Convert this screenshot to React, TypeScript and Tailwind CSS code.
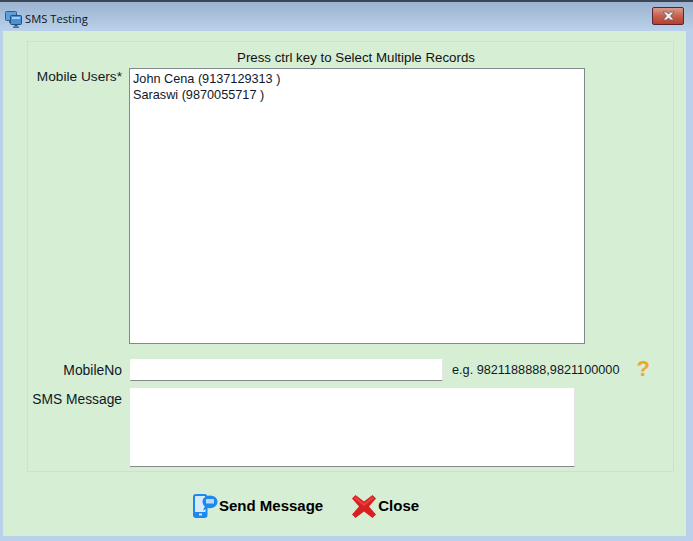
const users = ['John Cena (9137129313 )', 'Saraswi (9870055717 )']

function MonitorsIcon() {
  return (
    <svg width="17" height="17" viewBox="0 0 17 17" className="shrink-0">
      <rect x="0.500" y="0.500" width="11" height="9" rx="1" fill="#5f9fd8" stroke="#2f5f95" />
      <rect x="4" y="10" width="3" height="2" fill="#44617f" />
      <rect x="5.500" y="4.500" width="11" height="9" rx="1" fill="#4a90d4" stroke="#24527f" />
      <rect x="7" y="6" width="8" height="2" fill="#9fcdf2" />
      <rect x="9.500" y="14" width="3" height="1.500" fill="#34506c" />
      <rect x="8" y="15.500" width="6" height="1.500" fill="#54687c" />
    </svg>
  )
}

function CloseGlyph() {
  return (
    <svg width="13" height="10" viewBox="0 0 13 10">
      <path d="M1 1h3.500l2 2 2-2H12L8.500 5l3.500 4H8.500l-2-2-2 2H1l3.500-4z" fill="#f1f1f4" stroke="#5d5a66" strokeWidth="0.8" />
    </svg>
  )
}

function PhoneChatIcon() {
  return (
    <svg width="25" height="24" viewBox="0 0 25 24" className="shrink-0">
      <rect x="1" y="1" width="12.500" height="22" rx="2" fill="#d8ebfb" stroke="#1e88f0" strokeWidth="2" />
      <rect x="1" y="18" width="12.500" height="5" rx="1.500" fill="#1e88f0" />
      <rect x="6" y="19.500" width="3" height="2" fill="#d8ebfb" />
      <path d="M17 1.500c-4.300 0-7.500 2.800-7.500 6.300 0 1.900.9 3.500 2.300 4.600L10 16.500l4.700-2.500c.7.200 1.500.2 2.300.2 4.300 0 7.500-2.900 7.500-6.400S21.300 1.500 17 1.500z" fill="#1e88f0" />
      <rect x="13" y="5" width="8" height="4.500" rx="0.500" fill="#bcd9f5" />
    </svg>
  )
}

function RedCrossIcon() {
  return (
    <svg width="24" height="23" viewBox="0 0 24 23" className="shrink-0">
      <path d="M3.500 0 12 6.500 20.500 0 24 3.500 17 11.500 24 19.500 20.500 23 12 16.500 3.500 23 0 19.500 7 11.500 0 3.500z" fill="#d81f22" />
      <path d="M3.500 1.500 12 8.500 20.500 1.500 22 3.500 12 11 2 3.500z" fill="#e8403c" />
    </svg>
  )
}

export default function App() {
  return (
    <div className="flex h-[541px] w-[693px] flex-col overflow-hidden border-t-2 border-[#3a4656] bg-[#b9d1ea] font-['Liberation_Sans',sans-serif] text-[12.7px] leading-[16px] text-[#101828]">
      <div className="flex h-[29px] shrink-0 items-center justify-between bg-gradient-to-b from-[#9bb3cf] to-[#b9d1ea] pl-[5px] pr-[9px]">
        <div className="flex items-center gap-[3px] pt-[5px]">
          <MonitorsIcon />
          <span className="font-['Open_Sans',sans-serif] text-[11.2px] text-[#111]">SMS Testing</span>
        </div>
        <button
          type="button"
          className="mb-[1px] flex h-[18px] w-[32px] items-center justify-center rounded-[2px] border border-[#5c2330] bg-gradient-to-b from-[#d99a8d] via-[#c4604c] to-[#b8402c]"
        >
          <CloseGlyph />
        </button>
      </div>

      <div className="ml-[3px] mr-[7px] flex h-[505px] flex-col bg-[#d6eed4] pl-[24px] pr-[12px] pt-[10px]">
        <fieldset className="flex h-[431px] flex-col border border-[#d0e0ce] pt-[8px]">
          <p className="pl-[11px] text-center text-[13.3px] text-[#111]">Press ctrl key to Select Multiple Records</p>

          <div className="mt-[2px] flex">
            <label className="w-[94px] shrink-0 pt-[1px] text-right text-[13.700px]">Mobile Users*</label>
            <div className="ml-[7px] h-[276px] w-[456px] border border-[#7f8a8f] bg-white px-[3px] py-[2px]">
              {users.map((user) => (
                <div key={user}>{user}</div>
              ))}
            </div>
          </div>

          <div className="mt-[15px] flex items-center">
            <label className="w-[94px] shrink-0 text-right text-[13.900px]">MobileNo</label>
            <input
              type="text"
              className="ml-[8px] h-[22px] w-[313px] rounded-[1px] border-r border-b border-r-[#e4e4e4] border-b-[#85898c] bg-white outline-none"
            />
            <span className="ml-[9px]">e.g. 9821188888,9821100000</span>
            <span className="ml-[17px] -mt-[3px] text-[22px] font-bold leading-[18px] text-[#f0a924]">?</span>
          </div>

          <div className="mt-[7px] flex">
            <label className="w-[94px] shrink-0 pt-[4px] text-right text-[13.800px]">SMS Message</label>
            <textarea className="ml-[8px] h-[79px] w-[445px] resize-none border-r border-b border-r-[#e4e4e4] border-b-[#85898c] bg-white outline-none" />
          </div>
        </fieldset>

        <div className="mt-[22px] flex items-center pl-[166px] text-[15px] font-bold text-black">
          <button type="button" className="flex items-center gap-[1px]">
            <PhoneChatIcon />
            <span>Send Message</span>
          </button>
          <button type="button" className="ml-[29px] flex items-center gap-[2px]">
            <RedCrossIcon />
            <span>Close</span>
          </button>
        </div>
      </div>
    </div>
  )
}
